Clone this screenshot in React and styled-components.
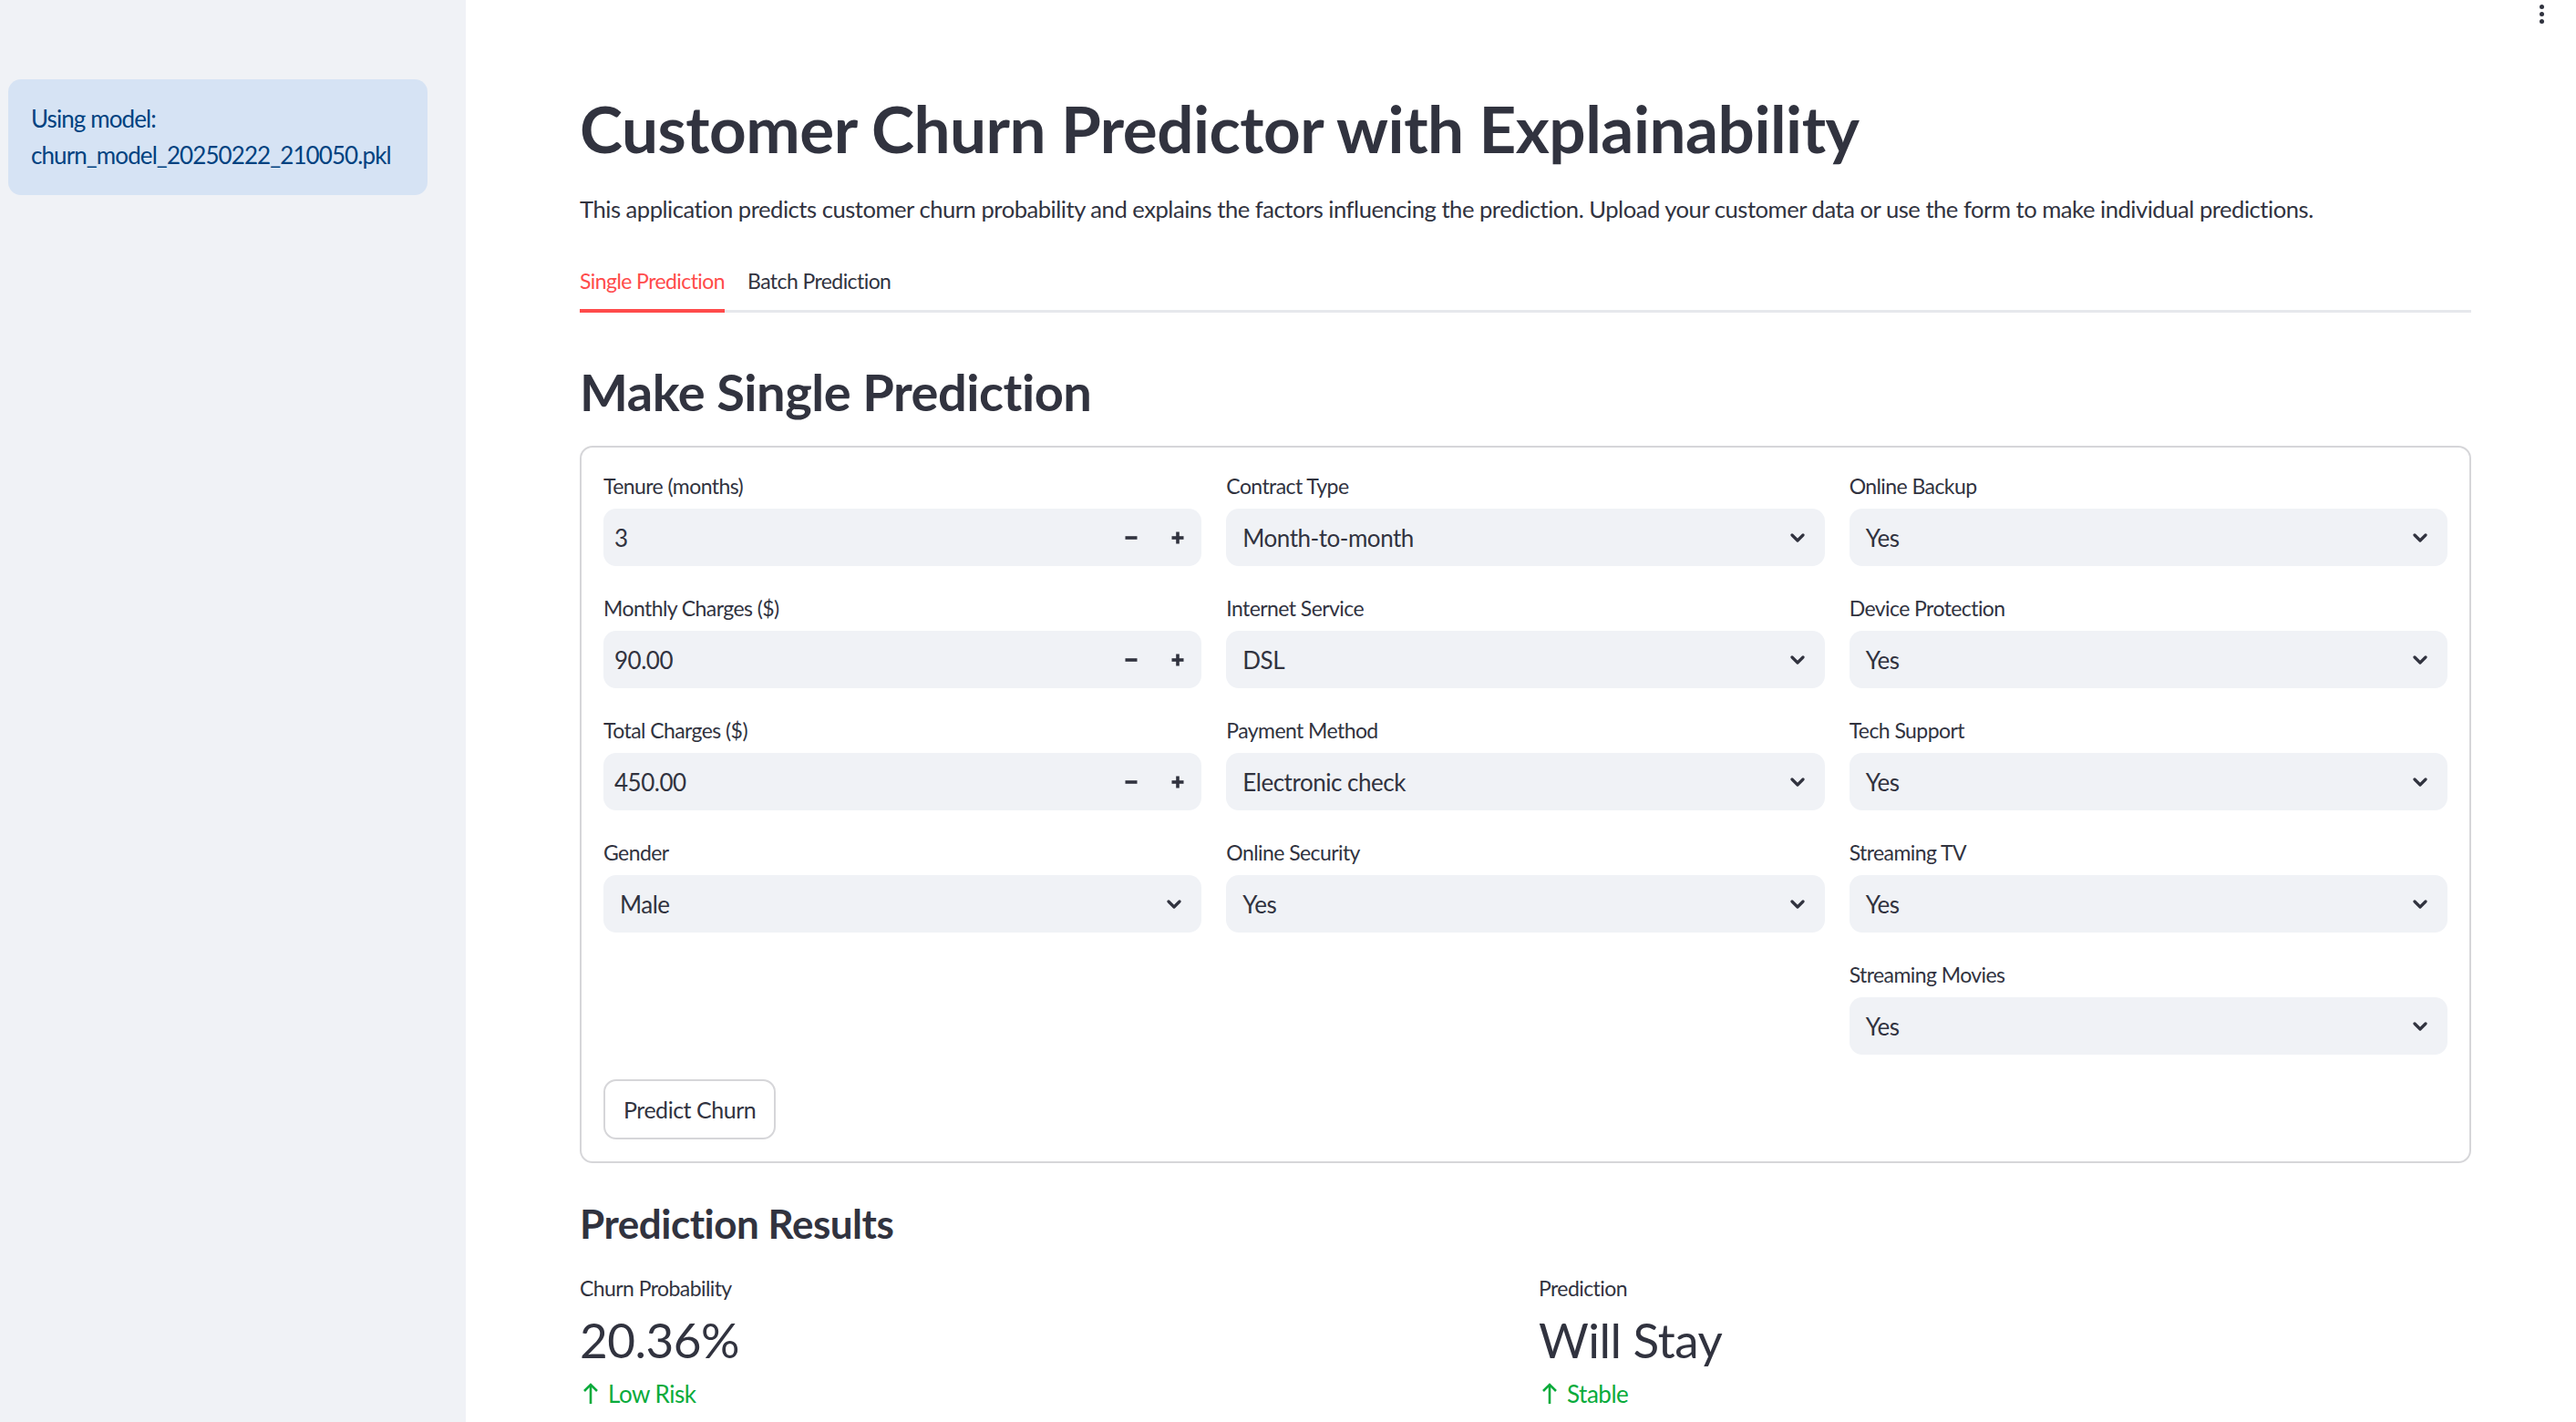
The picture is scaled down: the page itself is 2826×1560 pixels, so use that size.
import React from "react";
import styled, { createGlobalStyle } from "styled-components";

const GlobalStyle = createGlobalStyle`
  html, body {
    margin: 0;
    padding: 0;
    background: #ffffff;
  }
  body {
    font-family: "Lato", "Noto Sans", sans-serif;
    color: #31333f;
    letter-spacing: -0.03em;
  }
  * { box-sizing: border-box; }
`;

const Shell = styled.div`
  display: flex;
  min-height: 1560px;
  position: relative;
`;

const Sidebar = styled.aside`
  width: 511px;
  flex-shrink: 0;
  background: #f0f2f6;
  padding: 87px 42px 0 9px;
`;

const InfoBox = styled.div`
  background: #d6e3f4;
  color: #004280;
  border-radius: 14px;
  padding: 23px 25px 24px;
  font-size: 26px;
  line-height: 40px;
  letter-spacing: -0.035em;
`;

const Main = styled.main`
  flex: 1;
  padding: 93px 115px 0 125px;
`;

const Title = styled.h1`
  margin: 0;
  font-size: 71px;
  line-height: 96px;
  font-weight: 700;
  color: #31333f;
`;

const Intro = styled.p`
  margin: 18px 0 0;
  font-size: 25.6px;
  line-height: 44px;
`;

const TabList = styled.div`
  margin-top: 37px;
  display: flex;
  gap: 25px;
  border-bottom: 3px solid #e6e8ec;
`;

const Tab = styled.button`
  background: none;
  border: none;
  padding: 0 0 11px;
  margin-bottom: -3px;
  font-family: inherit;
  letter-spacing: -0.025em;
  font-size: 23px;
  line-height: 40px;
  color: ${(p) => (p.$active ? "#ff4b4b" : "#31333f")};
  border-bottom: 4px solid ${(p) => (p.$active ? "#ff4b4b" : "transparent")};
  cursor: pointer;
`;

const SectionTitle = styled.h2`
  margin: 48px 0 0;
  font-size: 56px;
  line-height: 78px;
  font-weight: 700;
`;

const Card = styled.form`
  margin-top: 20px;
  border: 2px solid #d6d6d9;
  border-radius: 14px;
  padding: 24px 24px 24px;
`;

const Columns = styled.div`
  display: grid;
  grid-template-columns: repeat(3, 1fr);
  gap: 27px;
  align-items: start;
`;

const Column = styled.div`
  display: flex;
  flex-direction: column;
  gap: 28px;
`;

const Field = styled.div`
  display: flex;
  flex-direction: column;
  gap: 7px;
`;

const Label = styled.label`
  font-size: 23px;
  line-height: 36px;
  letter-spacing: -0.025em;
`;

const Control = styled.div`
  height: 63px;
  background: #f0f2f6;
  border-radius: 14px;
  display: flex;
  align-items: center;
  font-size: 26px;
  padding-left: ${(p) => (p.$number ? "12px" : "18px")};
  padding-right: ${(p) => (p.$number ? "1px" : "22px")};
`;

const Value = styled.span`
  flex: 1;
`;

const StepButton = styled.button`
  width: 51px;
  height: 100%;
  border: none;
  background: none;
  display: flex;
  align-items: center;
  justify-content: center;
  color: #31333f;
  padding: 0;
  cursor: pointer;
`;

const SubmitButton = styled.button`
  margin-top: 27px;
  height: 66px;
  padding: 0 20px;
  background: #ffffff;
  border: 2px solid #d6d6d9;
  border-radius: 14px;
  font-family: inherit;
  letter-spacing: inherit;
  font-size: 25px;
  color: #31333f;
  cursor: pointer;
`;

const ResultsTitle = styled.h3`
  margin: 36px 0 0;
  font-size: 44px;
  line-height: 61px;
  font-weight: 700;
`;

const Metrics = styled.div`
  margin-top: 22px;
  display: grid;
  grid-template-columns: 1fr 1fr;
  gap: 29px;
`;

const Metric = styled.div`
  display: flex;
  flex-direction: column;
`;

const MetricLabel = styled.div`
  font-size: 23px;
  line-height: 36px;
  letter-spacing: -0.025em;
`;

const MetricValue = styled.div`
  font-size: 53px;
  line-height: 78px;
`;

const Delta = styled.div`
  display: flex;
  align-items: center;
  gap: 7px;
  color: #09ab3b;
  font-size: 26px;
  line-height: 40px;
`;

const Kebab = styled.div`
  position: absolute;
  top: 5px;
  right: 35px;
  display: flex;
  flex-direction: column;
  gap: 3px;
  span {
    width: 5px;
    height: 5px;
    border-radius: 50%;
    background: #31333f;
  }
`;

const Chevron = () => (
  <svg width="16" height="10" viewBox="0 0 16 10" fill="none">
    <polyline points="2,2 8,8 14,2" stroke="#31333f" strokeWidth="3.2" strokeLinecap="round" strokeLinejoin="round" />
  </svg>
);

const Minus = () => (
  <svg width="14" height="14" viewBox="0 0 14 14">
    <line x1="0.5" y1="7" x2="13.5" y2="7" stroke="#31333f" strokeWidth="3.6" />
  </svg>
);

const Plus = () => (
  <svg width="14" height="14" viewBox="0 0 14 14">
    <line x1="0.5" y1="7" x2="13.5" y2="7" stroke="#31333f" strokeWidth="3.6" />
    <line x1="7" y1="0.5" x2="7" y2="13.5" stroke="#31333f" strokeWidth="3.6" />
  </svg>
);

const ArrowUp = () => (
  <svg width="24" height="26" viewBox="0 0 24 26" fill="none">
    <line x1="12" y1="3" x2="12" y2="24" stroke="#09ab3b" strokeWidth="2.6" />
    <polyline points="5,10 12,3 19,10" stroke="#09ab3b" strokeWidth="2.6" fill="none" />
  </svg>
);

const NumberField = ({ label, value }) => (
  <Field>
    <Label>{label}</Label>
    <Control $number>
      <Value>{value}</Value>
      <StepButton type="button"><Minus /></StepButton>
      <StepButton type="button"><Plus /></StepButton>
    </Control>
  </Field>
);

const SelectField = ({ label, value }) => (
  <Field>
    <Label>{label}</Label>
    <Control>
      <Value>{value}</Value>
      <Chevron />
    </Control>
  </Field>
);

const columns = [
  [
    { type: "number", label: "Tenure (months)", value: "3" },
    { type: "number", label: "Monthly Charges ($)", value: "90.00" },
    { type: "number", label: "Total Charges ($)", value: "450.00" },
    { type: "select", label: "Gender", value: "Male" },
  ],
  [
    { type: "select", label: "Contract Type", value: "Month-to-month" },
    { type: "select", label: "Internet Service", value: "DSL" },
    { type: "select", label: "Payment Method", value: "Electronic check" },
    { type: "select", label: "Online Security", value: "Yes" },
  ],
  [
    { type: "select", label: "Online Backup", value: "Yes" },
    { type: "select", label: "Device Protection", value: "Yes" },
    { type: "select", label: "Tech Support", value: "Yes" },
    { type: "select", label: "Streaming TV", value: "Yes" },
    { type: "select", label: "Streaming Movies", value: "Yes" },
  ],
];

const App = () => {
  return (
    <>
      <GlobalStyle />
      <Shell>
        <Sidebar>
          <InfoBox>
            Using model:
            <br />
            churn_model_20250222_210050.pkl
          </InfoBox>
        </Sidebar>
        <Main>
          <Title>Customer Churn Predictor with Explainability</Title>
          <Intro>
            This application predicts customer churn probability and explains the factors influencing the prediction. Upload your customer data or use the form to make individual predictions.
          </Intro>
          <TabList>
            <Tab $active>Single Prediction</Tab>
            <Tab>Batch Prediction</Tab>
          </TabList>
          <SectionTitle>Make Single Prediction</SectionTitle>
          <Card onSubmit={(e) => e.preventDefault()}>
            <Columns>
              {columns.map((col, i) => (
                <Column key={i}>
                  {col.map((f) =>
                    f.type === "number" ? (
                      <NumberField key={f.label} label={f.label} value={f.value} />
                    ) : (
                      <SelectField key={f.label} label={f.label} value={f.value} />
                    )
                  )}
                </Column>
              ))}
            </Columns>
            <SubmitButton type="submit">Predict Churn</SubmitButton>
          </Card>
          <ResultsTitle>Prediction Results</ResultsTitle>
          <Metrics>
            <Metric>
              <MetricLabel>Churn Probability</MetricLabel>
              <MetricValue>20.36%</MetricValue>
              <Delta><ArrowUp />Low Risk</Delta>
            </Metric>
            <Metric>
              <MetricLabel>Prediction</MetricLabel>
              <MetricValue>Will Stay</MetricValue>
              <Delta><ArrowUp />Stable</Delta>
            </Metric>
          </Metrics>
        </Main>
        <Kebab><span /><span /><span /></Kebab>
      </Shell>
    </>
  );
};

export default App;
